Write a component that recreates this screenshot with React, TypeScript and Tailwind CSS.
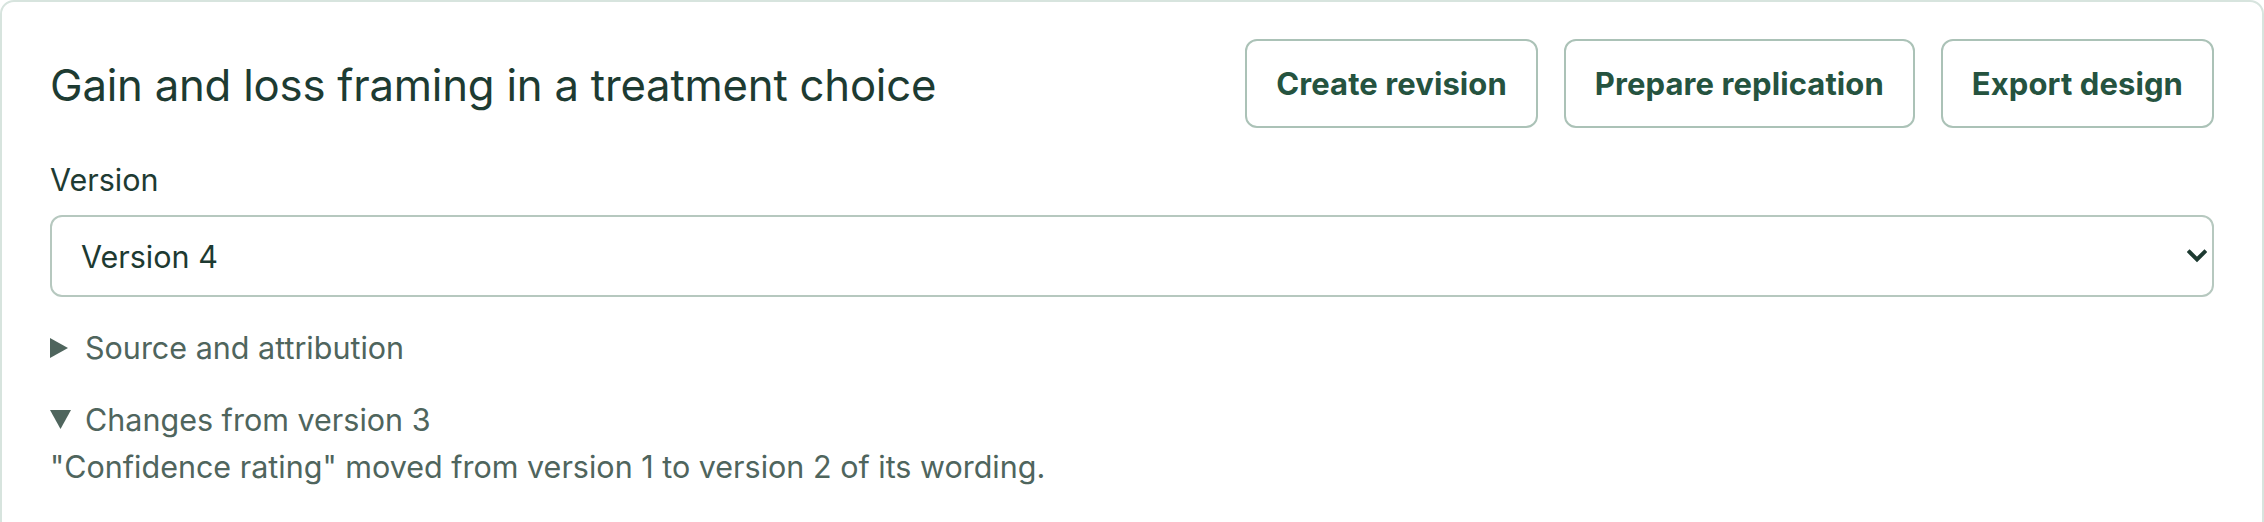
const actions = ['Create revision', 'Prepare replication', 'Export design']

function Chevron() {
  return (
    <svg width="20" height="14" viewBox="0 0 20 14" className="text-[#1d3a31]" aria-hidden="true">
      <polyline points="2.5,3 10,10.5 17.5,3" fill="none" stroke="currentColor" strokeWidth="4" strokeLinecap="square" strokeLinejoin="miter" />
    </svg>
  )
}

function Triangle({ open }: { open?: boolean }) {
  if (open) {
    return (
      <svg width="21" height="19" viewBox="0 0 21 19" className="shrink-0 text-[#4f655d]" aria-hidden="true">
        <polygon points="0,0 21,0 10.5,19" fill="currentColor" />
      </svg>
    )
  }
  return (
    <svg width="18" height="20" viewBox="0 0 18 20" className="shrink-0 text-[#4f655d]" aria-hidden="true">
      <polygon points="0,0 18,10 0,20" fill="currentColor" />
    </svg>
  )
}

export default function App() {
  return (
    <div className="min-h-screen bg-white font-['Inter','Liberation_Sans',sans-serif]">
      <div className="rounded-[14px] border-2 border-[#d7e4de] bg-white px-[48px] pt-[37px] pb-[48px]">
        {/* header */}
        <div className="flex h-[89px] items-center justify-between">
          <h1 className="mt-[6px] text-[43.7px] leading-[1.2] font-normal tracking-[-0.005em] text-[#1d3b32]">
            Gain and loss framing in a treatment choice
          </h1>
          <div className="flex items-center gap-[26px]">
            {actions.map((label) => (
              <button
                key={label}
                type="button"
                className="rounded-[12px] border-2 border-[#abc2b7] bg-white px-[29px] py-[20px] text-[31px] leading-[45px] font-bold tracking-[0.003em] text-[#25533f]"
              >
                {label}
              </button>
            ))}
          </div>
        </div>

        <label htmlFor="version" className="mt-[29px] block text-[30.5px] leading-[45px] text-[#1e3b33]">
          Version
        </label>
        <div className="relative mt-[13px]">
          <select
            id="version"
            defaultValue="4"
            className="block h-[82px] w-full appearance-none rounded-[12px] border-2 border-[#b6c8bf] bg-white pl-[29px] pr-[60px] text-[30.5px] leading-[45px] text-[#1d3a31] outline-none"
          >
            <option value="4">Version 4</option>
            <option value="3">Version 3</option>
            <option value="2">Version 2</option>
            <option value="1">Version 1</option>
          </select>
          <span className="pointer-events-none absolute right-[7px] top-1/2 -translate-y-1/2">
            <Chevron />
          </span>
        </div>

        <details className="mt-[28px]">
          <summary className="flex cursor-pointer list-none items-center gap-[17px] text-[30.5px] leading-[45px] text-[#4f655d] [&::-webkit-details-marker]:hidden">
            <Triangle />
            Source and attribution
          </summary>
        </details>

        <details open className="mt-[27px]">
          <summary className="flex cursor-pointer list-none items-center gap-[14px] text-[30.5px] leading-[45px] text-[#4f655d] [&::-webkit-details-marker]:hidden">
            <Triangle open />
            Changes from version 3
          </summary>
          <p className="mt-[2px] text-[30.5px] leading-[45px] text-[#4f655d]">
            "Confidence rating" moved from version 1 to version 2 of its wording.
          </p>
        </details>
      </div>
    </div>
  )
}
